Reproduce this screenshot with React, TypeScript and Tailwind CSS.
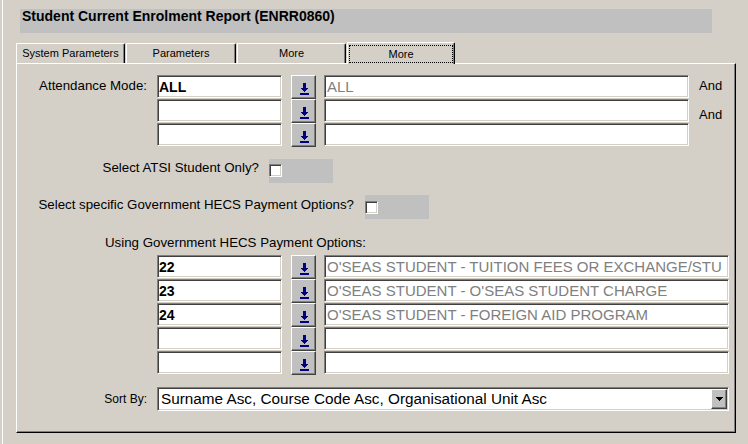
import React from "react"

// classic win32 bevels
const sunken =
  "bg-white border-t border-l border-b border-r border-t-[#808080] border-l-[#808080] border-b-white border-r-white shadow-[inset_1px_1px_0_#404040,inset_-1px_-1px_0_#d4d0c8]"
const raised =
  "bg-[#c0c0c0] border-t border-l border-b border-r border-t-white border-l-white border-b-[#404040] border-r-[#404040] shadow-[inset_-1px_-1px_0_#808080]"

function DownArrow() {
  return (
    <svg width="9" height="12" viewBox="0 0 9 12" shapeRendering="crispEdges" fill="#000080">
      <rect x="3" y="0" width="3" height="5" />
      <rect x="1" y="5" width="7" height="1" />
      <rect x="2" y="6" width="5" height="1" />
      <rect x="3" y="7" width="3" height="1" />
      <rect x="4" y="8" width="1" height="1" />
      <rect x="0" y="10" width="9" height="2" />
    </svg>
  )
}

function Checkbox() {
  return (
    <div className="w-[13px] h-[13px] bg-white border-t border-l border-b border-r border-t-[#808080] border-l-[#808080] border-b-white border-r-white shadow-[inset_1px_1px_0_#404040,inset_-1px_-1px_0_#d4d0c8]" />
  )
}

interface LookupRowProps {
  code?: string
  desc?: string
  wide?: boolean
  and?: "top" | "low"
}

function LookupRow({ code = "", desc = "", wide = false, and }: LookupRowProps) {
  return (
    <div className="flex h-[24px]">
      <div className={`${sunken} w-[125px] h-[23px] flex items-center pl-[1px] text-[14px] font-bold text-black leading-none`}>
        {code}
      </div>
      <div className={`${raised} ml-[9px] w-[25px] h-[24px] flex items-end justify-center pb-[3px] pl-[2px]`}>
        <DownArrow />
      </div>
      <div
        className={`${sunken} ml-[8px] ${wide ? "w-[405px]" : "w-[365px]"} h-[23px] flex items-center pl-[2px] text-[15px] text-[#808080] leading-none whitespace-nowrap overflow-hidden`}
      >
        {desc}
      </div>
      {and === "top" && <span className="ml-[10px] pt-[3px] text-[13px] leading-[15px]">And</span>}
      {and === "low" && <span className="ml-[10px] pt-[8px] text-[13px] leading-[15px]">And</span>}
    </div>
  )
}

const hecsRows = [
  { code: "22", desc: "O'SEAS STUDENT - TUITION FEES OR EXCHANGE/STU" },
  { code: "23", desc: "O'SEAS STUDENT - O'SEAS STUDENT CHARGE" },
  { code: "24", desc: "O'SEAS STUDENT - FOREIGN AID PROGRAM" },
  { code: "", desc: "" },
  { code: "", desc: "" },
]

export default function App() {
  return (
    <div className="w-[748px] h-[444px] bg-[#d4d0c8] overflow-hidden font-['Liberation_Sans',Arial,sans-serif] text-black shadow-[inset_2px_0_0_#d4d0c8,inset_3px_0_0_#ffffff] pt-[9px]">
      {/* title bar */}
      <div className="ml-[20px] w-[692px] h-[24px] bg-[#c0c0c0] pl-[2px] text-[14px] font-bold leading-[14px]">
        Student Current Enrolment Report (ENRR0860)
      </div>

      {/* tabs */}
      <div className="mt-[9px] ml-[16px] h-[21px] flex items-end gap-[1px] text-[11px]">
        <div className="w-[109px] h-[20px] rounded-tr-[2px] border-t border-l border-r border-t-white border-l-white border-r-black shadow-[inset_-1px_0_0_#808080] flex items-center justify-center">
          System Parameters
        </div>
        <div className="w-[110px] h-[20px] rounded-tr-[2px] border-t border-l border-r border-t-white border-l-white border-r-black shadow-[inset_-1px_0_0_#808080] flex items-center justify-center">
          Parameters
        </div>
        <div className="w-[109px] h-[20px] rounded-tr-[2px] border-t border-l border-r border-t-white border-l-white border-r-black shadow-[inset_-1px_0_0_#808080] flex items-center justify-center">
          More
        </div>
        <div className="relative z-10 -mb-[1px] w-[108px] h-[22px] bg-[#d4d0c8] rounded-tr-[2px] border-t border-l border-r border-t-white border-l-white border-r-black shadow-[inset_-1px_0_0_#808080] px-[1px] pt-[2px] pb-[1px]">
          <div className="h-full border border-dotted border-black flex items-center justify-center">More</div>
        </div>
      </div>

      {/* panel */}
      <div className="ml-[16px] w-[720px] h-[370px] border-t border-l border-b border-r border-t-white border-l-white border-b-black border-r-black shadow-[inset_-1px_-1px_0_#808080] text-[13.3px] leading-[15px]">
        {/* attendance mode */}
        <div className="mt-[11px] flex">
          <div className="w-[130px] pt-[3px] text-right whitespace-nowrap">Attendance Mode:</div>
          <div className="ml-[10px] flex flex-col">
            <LookupRow code="ALL" desc="ALL" and="top" />
            <LookupRow and="low" />
            <LookupRow />
          </div>
        </div>

        {/* ATSI */}
        <div className="mt-[12px] flex h-[24px]">
          <div className="w-[242px] pt-[1px] text-right whitespace-nowrap">Select ATSI Student Only?</div>
          <div className="ml-[10px] w-[64px] h-[24px] bg-[#c0c0c0] pt-[5px]">
            <Checkbox />
          </div>
        </div>

        {/* HECS options toggle */}
        <div className="mt-[12px] flex h-[24px]">
          <div className="w-[337px] pt-[2px] text-right whitespace-nowrap">Select specific Government HECS Payment Options?</div>
          <div className="ml-[11px] w-[64px] h-[24px] bg-[#c0c0c0] pt-[6px]">
            <Checkbox />
          </div>
        </div>

        <div className="mt-[16px] h-[16px] pl-[88px] whitespace-nowrap">Using Government HECS Payment Options:</div>

        <div className="mt-[4px] pl-[140px] flex flex-col">
          {hecsRows.map((r, i) => (
            <LookupRow key={i} code={r.code} desc={r.desc} wide />
          ))}
        </div>

        {/* sort */}
        <div className="mt-[12px] flex items-center h-[24px]">
          <div className="w-[130px] text-right text-[12px]">Sort By:</div>
          <div className={`${sunken} ml-[10px] w-[572px] h-[24px] flex items-stretch py-[1px] pr-[1px]`}>
            <div className="flex-1 flex items-center pl-[3px] text-[15.3px] leading-none whitespace-nowrap">
              Surname Asc, Course Code Asc, Organisational Unit Asc
            </div>
            <div className={`${raised} w-[16px] flex items-center justify-center`}>
              <svg width="7" height="4" viewBox="0 0 7 4" shapeRendering="crispEdges" fill="#000">
                <rect x="0" y="0" width="7" height="1" />
                <rect x="1" y="1" width="5" height="1" />
                <rect x="2" y="2" width="3" height="1" />
                <rect x="3" y="3" width="1" height="1" />
              </svg>
            </div>
          </div>
        </div>
      </div>
    </div>
  )
}
